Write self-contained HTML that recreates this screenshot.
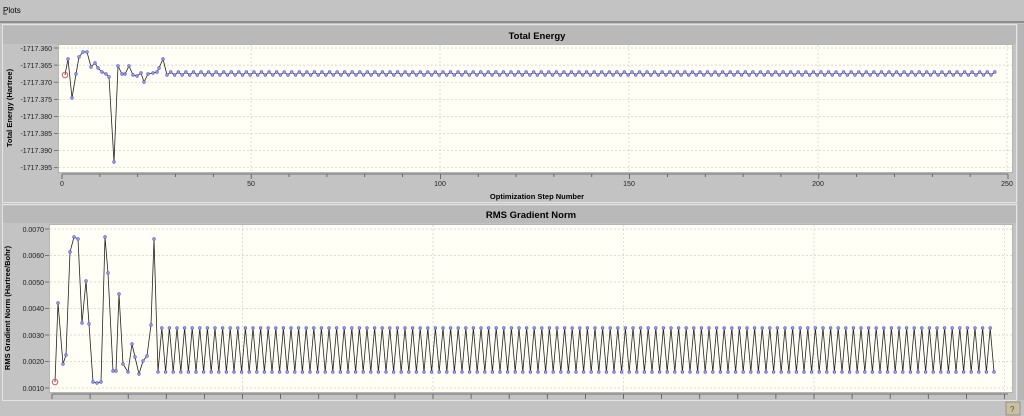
<!DOCTYPE html>
<html><head><meta charset="utf-8"><style>
html,body{margin:0;padding:0;width:1024px;height:416px;overflow:hidden;background:#c3c3c3;font-family:"Liberation Sans",sans-serif;}
svg{position:absolute;left:0;top:0}
</style></head><body>
<svg id="s" width="1024" height="416" xmlns="http://www.w3.org/2000/svg" font-family="Liberation Sans, sans-serif">
<rect x="0" y="0" width="1024" height="416" fill="#c3c3c3"/>
<text x="3" y="13" font-size="8" fill="#000">Plots</text>
<line x1="3" y1="14" x2="7" y2="14" stroke="#000" stroke-width="0.7"/>
<rect x="0" y="21" width="1024" height="2" fill="#8e8e8e"/>
<rect x="2.5" y="24.5" width="1014" height="178" fill="#c3c3c3" stroke="#e4e4e4"/>
<rect x="3" y="26" width="1013" height="18" fill="#b9b9b9"/>
<text x="537" y="39" font-size="9.5" font-weight="bold" text-anchor="middle">Total Energy</text>
<rect x="58.5" y="44.5" width="954" height="128" fill="#fffff6" stroke="#9a9a9a" stroke-width="0.6"/>
<rect x="2.5" y="204.5" width="1014" height="196" fill="#c3c3c3" stroke="#e4e4e4"/>
<rect x="3" y="206" width="1013" height="17" fill="#b9b9b9"/>
<text x="531" y="218" font-size="9.5" font-weight="bold" text-anchor="middle">RMS Gradient Norm</text>
<rect x="49.5" y="224.5" width="963" height="168" fill="#fffff6" stroke="#9a9a9a" stroke-width="0.6"/>
<rect x="1018" y="24" width="6" height="376" fill="#b5b5b5"/>
<rect x="1006" y="402" width="14" height="13" fill="#c8c0a0" stroke="#777" stroke-width="0.6"/>
<text x="1010" y="412" font-size="8" fill="#553">?</text>
<text transform="translate(12,108) rotate(-90)" font-size="7.5" font-weight="bold" text-anchor="middle">Total Energy (Hartree)</text>
<text transform="translate(10,308) rotate(-90)" font-size="7.5" font-weight="bold" text-anchor="middle">RMS Gradient Norm (Hartree/Bohr)</text>
<text x="537" y="199" font-size="7.5" font-weight="bold" text-anchor="middle">Optimization Step Number</text>
<g font-size="7" fill="#222" text-anchor="end">
<text x="52" y="51">-1717.360</text><text x="52" y="68">-1717.365</text><text x="52" y="85">-1717.370</text><text x="52" y="102">-1717.375</text><text x="52" y="119">-1717.380</text><text x="52" y="136">-1717.385</text><text x="52" y="153">-1717.390</text><text x="52" y="170">-1717.395</text>
<text x="44" y="232">0.0070</text><text x="44" y="258">0.0060</text><text x="44" y="285">0.0050</text><text x="44" y="311">0.0040</text><text x="44" y="338">0.0030</text><text x="44" y="364">0.0020</text><text x="44" y="391">0.0010</text>
</g>
<g font-size="7" fill="#222" text-anchor="middle">
<text x="62" y="186">0</text><text x="251" y="186">50</text><text x="440" y="186">100</text><text x="629" y="186">150</text><text x="818" y="186">200</text><text x="1007" y="186">250</text>
</g>
<g id="dyn"></g>
</svg>
<script>
var NS="http://www.w3.org/2000/svg",g=document.getElementById('dyn');
function el(n,a){var e=document.createElementNS(NS,n);for(var k in a)e.setAttribute(k,a[k]);g.appendChild(e);return e;}
for(var i=0;i<8;i++){var y=48+i*17.1;el('line',{x1:59,x2:1012,y1:y,y2:y,stroke:'#cfcfcf','stroke-dasharray':'2,2','stroke-width':0.7});el('line',{x1:54,x2:58,y1:y,y2:y,stroke:'#555','stroke-width':0.7});}
for(var i=1;i<=5;i++){var x=62+i*37.8*5;el('line',{x1:x,x2:x,y1:45,y2:172,stroke:'#cfcfcf','stroke-dasharray':'2,2','stroke-width':0.7});}
el('line',{x1:62,x2:1008,y1:174,y2:174,stroke:'#555','stroke-width':0.8});
for(var i=0;i<=25;i++){var x=62+i*37.84;el('line',{x1:x,x2:x,y1:174,y2:i%5==0?179:177,stroke:'#555','stroke-width':0.8});}
for(var i=0;i<7;i++){var y=229+i*26.5;el('line',{x1:50,x2:1012,y1:y,y2:y,stroke:'#cfcfcf','stroke-dasharray':'2,2','stroke-width':0.7});el('line',{x1:45,x2:49,y1:y,y2:y,stroke:'#555','stroke-width':0.7});}
for(var i=1;i<=5;i++){var x=52+i*38.1*5;el('line',{x1:x,x2:x,y1:225,y2:392,stroke:'#cfcfcf','stroke-dasharray':'2,2','stroke-width':0.7});}
el('line',{x1:52,x2:1008,y1:394,y2:394,stroke:'#555','stroke-width':0.8});
for(var i=0;i<=25;i++){var x=52+i*38.1;el('line',{x1:x,x2:x,y1:394,y2:399,stroke:'#555','stroke-width':0.8});}
var t=[[65,75],[68,59],[72,98],[76,74],[79,57],[83,52],[87,52],[91,67],[95,63],[98,68],[102,72],[106,74],[109,77],[114,162],[118,66],[122,74],[125,74],[129,66],[133,75],[137,76],[141,73],[144,82],[148,74],[153,73],[157,72],[159,68],[163,59]];
var x=167,k=0;while(x<=995){t.push([x,k%2?72:75]);x+=3.78;k++;}
var b=[[55,382],[58,303],[63,364],[66,355],[70,252],[74,237],[78,239],[82,323],[86,281],[89,324],[93,382],[97,383],[101,382],[105,237],[108,273],[113,371],[116,371],[119,294],[123,364],[128,372],[132,344],[135,357],[139,374],[143,361],[147,356],[151,325],[154,239]];
x=158;k=0;while(x<=994){b.push([x,k%2?328:372]);x+=3.8;k++;}
function draw(p){el('polyline',{points:p.map(function(q){return q.join(',')}).join(' '),fill:'none',stroke:'#222','stroke-width':0.8});
for(var i=1;i<p.length;i++)el('circle',{cx:p[i][0],cy:p[i][1],r:1.3,fill:'#b8b8f0',stroke:'#6060d0','stroke-width':0.8});
el('circle',{cx:p[0][0],cy:p[0][1],r:2.8,fill:'none',stroke:'#e04060','stroke-width':0.9});}
draw(t);draw(b);
</script>
</body></html>
